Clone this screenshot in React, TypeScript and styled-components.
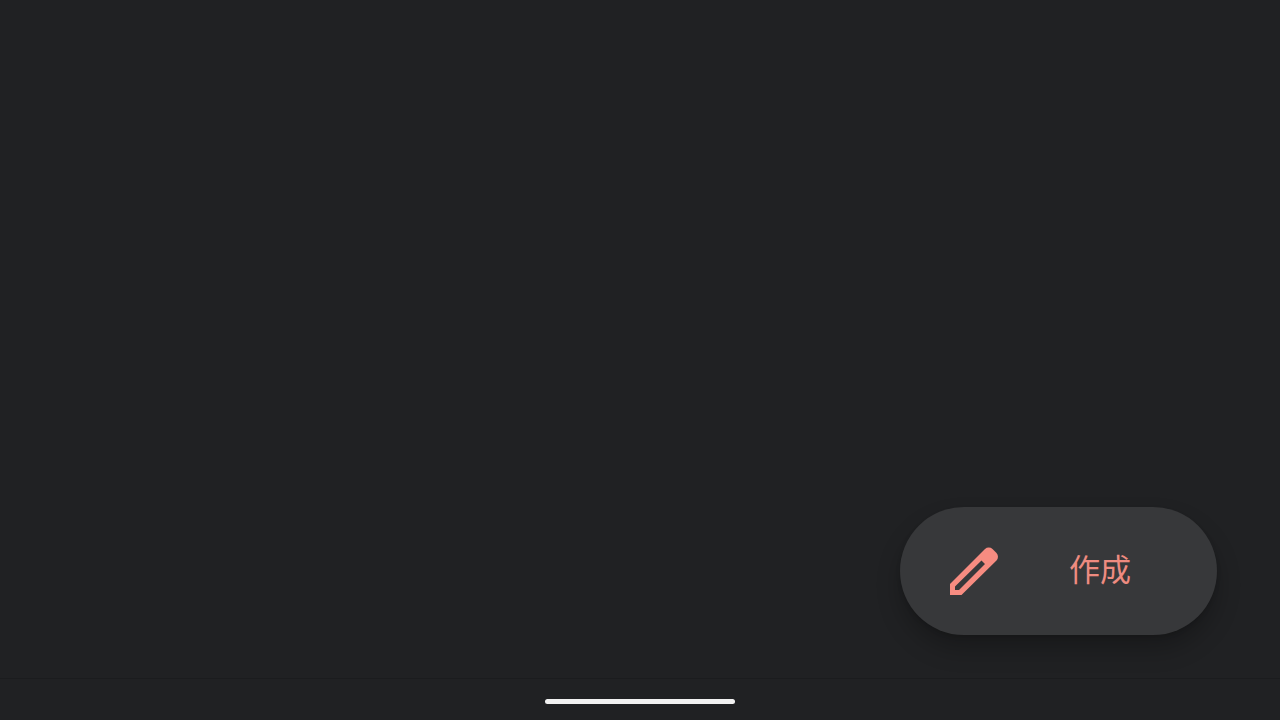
import React from "react";
import styled, { createGlobalStyle } from "styled-components";

const GlobalStyle = createGlobalStyle`
  *, *::before, *::after { box-sizing: border-box; }
  body {
    margin: 0;
    background: #202123;
    font-family: Roboto, "Noto Sans CJK JP", sans-serif;
  }
`;

const Screen = styled.div`
  display: flex;
  flex-direction: column;
  min-height: 100vh;
  background: #202123;
`;

const Content = styled.main`
  flex: 1;
  display: flex;
  align-items: flex-end;
  justify-content: flex-end;
  padding: 43px 63px;
`;

const ComposeButton = styled.button`
  display: flex;
  align-items: center;
  gap: 71px;
  padding: 0 86px 0 50px;
  height: 128px;
  border: 0;
  border-radius: 64px;
  background: #37383a;
  color: #ee8b80;
  font-family: inherit;
  font-size: 31px;
  line-height: 40px;
  white-space: nowrap;
  cursor: pointer;
  box-shadow: 0 14px 24px rgba(0, 0, 0, 0.24), 0 2px 4px rgba(0, 0, 0, 0.12);
`;

const Pencil = styled.svg`
  flex: none;
  width: 48px;
  height: 48px;
  fill: #f78c81;
`;

const NavigationBar = styled.footer`
  display: flex;
  align-items: center;
  justify-content: center;
  height: 42px;
  padding-top: 4px;
  border-top: 1px solid #1b1c1e;
`;

const HomeHandle = styled.div`
  width: 190px;
  height: 5px;
  border-radius: 3px;
  background: #f1f1f1;
`;

export default function App() {
  return (
    <Screen>
      <GlobalStyle />
      <Content>
        <ComposeButton type="button">
          <Pencil viewBox="0 0 48 48" aria-hidden="true">
            <path
              fillRule="evenodd"
              d="M0 48V37L35 2a5.5 5.5 0 0 1 7.500 0l4 4a5.500 5.500 0 0 1 0 7.500L11.500 48ZM5 39.500V43h4L35 17 31.500 13.500Z"
            />
          </Pencil>
          <span>作成</span>
        </ComposeButton>
      </Content>
      <NavigationBar>
        <HomeHandle />
      </NavigationBar>
    </Screen>
  );
}
